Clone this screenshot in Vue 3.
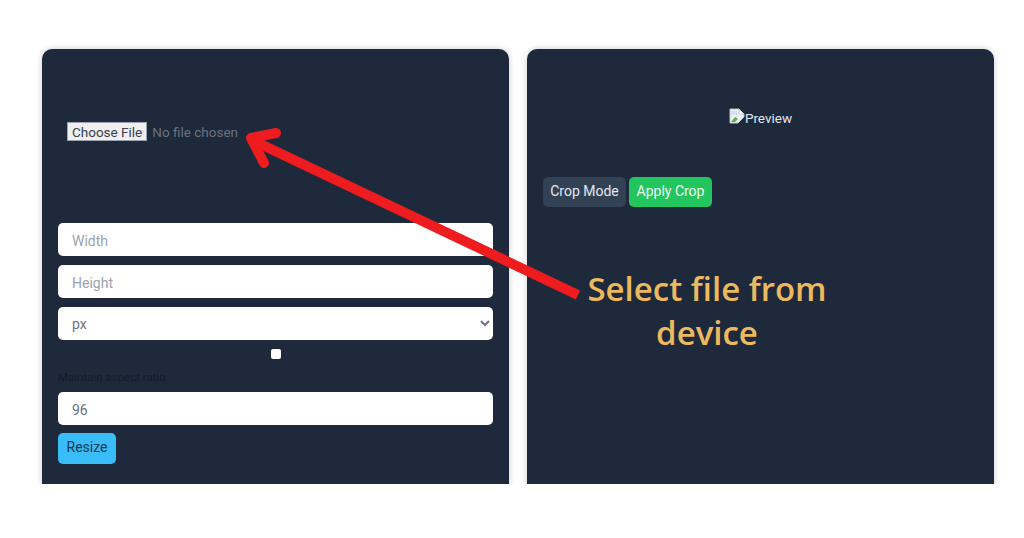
<script setup>
import { ref } from 'vue';

const width = ref('');
const height = ref('');
const unit = ref('px');
const keepRatio = ref(false);
const dpi = ref('96');
</script>

<template>
  <div class="page">
    <div class="tool">
      <!-- Left panel: upload + resize form -->
      <section class="card form-card">
        <div class="upload-row">
          <input type="file" class="file-input" />
        </div>
        <input v-model="width" type="text" class="field" placeholder="Width" />
        <input v-model="height" type="text" class="field" placeholder="Height" />
        <select v-model="unit" class="field select-field">
          <option value="px">px</option>
          <option value="cm">cm</option>
          <option value="in">in</option>
        </select>
        <div class="check-row">
          <input v-model="keepRatio" type="checkbox" class="check" />
        </div>
        <label class="ratio-label">Maintain aspect ratio</label>
        <input v-model="dpi" type="text" class="field dpi-field" />
        <button class="btn resize-btn">Resize</button>
      </section>

      <!-- Right panel: preview + crop actions -->
      <section class="card preview-card">
        <div class="preview">
          <svg class="broken-img" viewBox="0 0 16 16" width="16" height="16">
            <path d="M1 1h9l5 5v3L9 15H1z" fill="#eef1f4" stroke="#c3c7cc" stroke-width="1" />
            <path d="M10 1v5h5z" fill="#fff" stroke="#c3c7cc" stroke-width="1" />
            <path d="M2 14l4-5 3 2-3 3z" fill="#5fae52" />
            <path d="M2 3h6v4H2z" fill="#d5e0f2" />
          </svg>
          <span>Preview</span>
        </div>
        <div class="crop-actions">
          <button class="btn crop-btn">Crop Mode</button>
          <button class="btn apply-btn">Apply Crop</button>
        </div>
      </section>
    </div>

    <!-- Annotation drawn over the screenshot -->
    <svg class="arrow" viewBox="0 0 1024 538" width="1024" height="538">
      <path d="M578 295L254 141" fill="none" stroke="#ee1c1f" stroke-width="10" />
      <path d="M276 133L251 138L264 163" fill="none" stroke="#ee1c1f" stroke-width="10" stroke-linecap="round" stroke-linejoin="round" />
    </svg>
    <div class="callout">Select file from<br />device</div>
  </div>
</template>

<style scoped>
.page {
  position: relative;
  width: 1024px;
  height: 538px;
  background: #fff;
  overflow: hidden;
  font-family: Roboto, "Liberation Sans", sans-serif;
}

.tool {
  display: grid;
  grid-template-columns: 467px 467px;
  gap: 18px;
  height: 435px;
  padding: 49px 0 0 42px;
  overflow: hidden;
  box-sizing: content-box;
}

.card {
  height: 470px;
  background: #1e293b;
  border-radius: 10px;
  box-shadow: 0 0 6px rgba(0, 0, 0, 0.2);
  box-sizing: border-box;
}

.form-card {
  display: flex;
  flex-direction: column;
  padding: 74px 16px 0;
}

.upload-row {
  height: 100px;
  margin-top: -1px;
  padding-bottom: 1px;
  padding-left: 9px;
}

.file-input {
  display: block;
  font-family: inherit;
  font-size: 13.5px;
  line-height: 19px;
  color: #6b7280;
}

.file-input::file-selector-button {
  height: 19px;
  padding: 0 4px;
  margin-right: 5px;
  border: 1px solid #9ca3af;
  border-radius: 0;
  background: #efefef;
  color: #374151;
  font-family: inherit;
  font-size: 13.5px;
}

.field {
  width: 100%;
  height: 33px;
  margin-bottom: 9px;
  padding: 2px 14px 0;
  border: none;
  border-radius: 5px;
  background: #fff;
  color: #6b7280;
  font-family: inherit;
  font-size: 14px;
  box-sizing: border-box;
  outline: none;
}

.field::placeholder {
  color: #9ca3af;
}

.select-field {
  margin-bottom: 0;
  padding: 0 0 0 10px;
}

.check-row {
  display: flex;
  justify-content: center;
  align-items: center;
  height: 28px;
}

.check {
  appearance: none;
  width: 10px;
  height: 10px;
  margin: 0;
  background: #fff;
  border-radius: 2px;
}

.ratio-label {
  height: 24px;
  line-height: 18px;
  font-size: 11.5px;
  color: #141c2a;
}

.dpi-field {
  margin-bottom: 8px;
}

.btn {
  height: 31px;
  border: none;
  border-radius: 5px;
  font-family: inherit;
  font-size: 14px;
  padding: 0 0 3px;
}

.resize-btn {
  width: 58px;
  background: #38bdf8;
  color: #12394f;
}

.preview-card {
  padding: 59px 16px 0;
}

.preview {
  display: flex;
  justify-content: center;
  align-items: flex-start;
  height: 69px;
  color: #e2e8f0;
  font-size: 13.5px;
  line-height: 20px;
}

.broken-img {
  flex-shrink: 0;
}

.crop-actions {
  display: flex;
  gap: 3px;
}

.crop-btn {
  width: 83px;
  height: 30px;
  background: #334155;
  color: #e2e8f0;
}

.apply-btn {
  width: 83px;
  height: 30px;
  background: #22c55e;
  color: #f0fdf4;
}

.arrow {
  position: absolute;
  top: 0;
  left: 0;
  pointer-events: none;
}

.callout {
  position: absolute;
  top: 267px;
  left: 567px;
  width: 280px;
  text-align: center;
  font-family: "Open Sans", "Liberation Sans", sans-serif;
  font-size: 33px;
  font-weight: 600;
  line-height: 44px;
  color: #edb95e;
}
</style>
